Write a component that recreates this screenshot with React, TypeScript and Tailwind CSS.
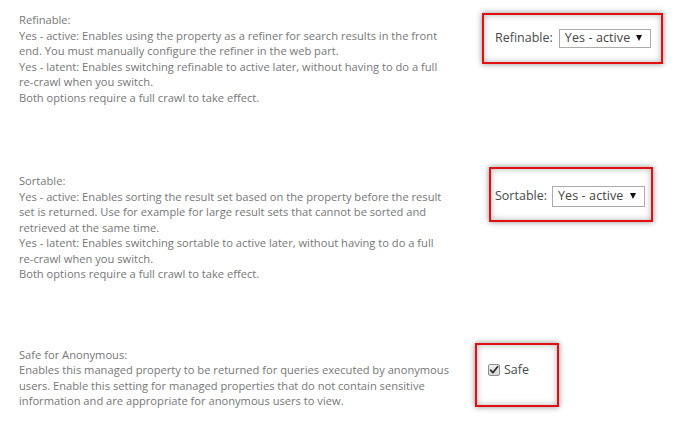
import React from "react";

const desc = "text-[#777777] text-[11.15px] leading-[15.5px] whitespace-nowrap";

function Lines({ lines }: { lines: string[] }) {
  return (
    <div className={desc}>
      {lines.map((l, i) => (
        <div key={i}>{l}</div>
      ))}
    </div>
  );
}

function FakeSelect({ w, h }: { w: string; h: string }) {
  return (
    <div className={`${w} ${h} border border-[#ababab] bg-white flex items-center justify-between pl-[5px] pr-[8px] text-[#444444] text-[12.5px] tracking-[0.1px]`}>
      <span className="whitespace-pre">Yes - active</span>
      <svg width="6" height="6" viewBox="0 0 6 6" className="mb-[2px]">
        <path d="M0 0 H6 L3 6 Z" fill="#111" />
      </svg>
    </div>
  );
}

const box =
  "border-2 border-[#e01010] shadow-[0_0_6px_rgba(0,0,0,0.45),inset_0_0_6px_rgba(0,0,0,0.3)] bg-white flex";

export default function App() {
  return (
    <div
      className="w-[676px] h-[426px] bg-white overflow-hidden"
      style={{ fontFamily: '"Open Sans", "Noto Sans", sans-serif' }}
    >
      <div className="flex flex-col pt-[12px]">
        {/* Refinable */}
        <div className="flex items-start mb-[68px]">
          <div className="w-[482px] pl-[19px] shrink-0">
            <Lines
              lines={[
                "Refinable:",
                "Yes - active: Enables using the property as a refiner for search results in the front",
                "end. You must manually configure the refiner in the web part.",
                "Yes - latent: Enables switching refinable to active later, without having to do a full",
                "re-crawl when you switch.",
                "Both options require a full crawl to take effect.",
              ]}
            />
          </div>
          <div className={`${box} items-center mt-[1px] w-[181px] h-[51px] pl-[11px]`}>
            <span className="text-[#4a4a4a] text-[12.5px] mr-[6px]">Refinable:</span>
            <FakeSelect w="w-[92px]" h="h-[19px]" />
          </div>
        </div>

        {/* Sortable */}
        <div className="flex items-start mb-[65px]">
          <div className="w-[482px] pl-[19px] shrink-0">
            <Lines
              lines={[
                "Sortable:",
                "Yes - active: Enables sorting the result set based on the property before the result",
                "set is returned. Use for example for large result sets that cannot be sorted and",
                "retrieved at the same time.",
                "Yes - latent: Enables switching sortable to active later, without having to do a full",
                "re-crawl when you switch.",
                "Both options require a full crawl to take effect.",
              ]}
            />
          </div>
          <div className={`${box} items-center mt-[-6px] ml-[7px] w-[164px] h-[55px] pl-[4px] pt-[4px]`}>
            <span className="text-[#4a4a4a] text-[12.5px] mr-[5px]">Sortable:</span>
            <FakeSelect w="w-[93px]" h="h-[21px]" />
          </div>
        </div>

        {/* Safe */}
        <div className="flex items-start">
          <div className="w-[482px] pl-[19px] shrink-0">
            <Lines
              lines={[
                "Safe for Anonymous:",
                "Enables this managed property to be returned for queries executed by anonymous",
                "users. Enable this setting for managed properties that do not contain sensitive",
                "information and are appropriate for anonymous users to view.",
              ]}
            />
          </div>
          <div className={`${box} items-start mt-[-4px] ml-[-7px] w-[84px] h-[64px] pl-[11px] pt-[15px]`}>
            <svg width="12" height="12" viewBox="0 0 12 12" className="mr-[4px] mt-[4px]">
              <defs>
                <linearGradient id="cb" x1="0" y1="0" x2="0" y2="1">
                  <stop offset="0" stopColor="#f2f2f2" />
                  <stop offset="1" stopColor="#d4d4d4" />
                </linearGradient>
              </defs>
              <rect x="0.5" y="0.5" width="11" height="11" rx="1.5" fill="url(#cb)" stroke="#8f8f8f" />
              <path d="M2.6 6.2 L4.9 8.6 L9.6 2.8" fill="none" stroke="#333" strokeWidth="1.8" strokeLinecap="round" strokeLinejoin="round" />
            </svg>
            <span className="text-[#4a4a4a] text-[12.5px] leading-[20px]">Safe</span>
          </div>
        </div>
      </div>
    </div>
  );
}
